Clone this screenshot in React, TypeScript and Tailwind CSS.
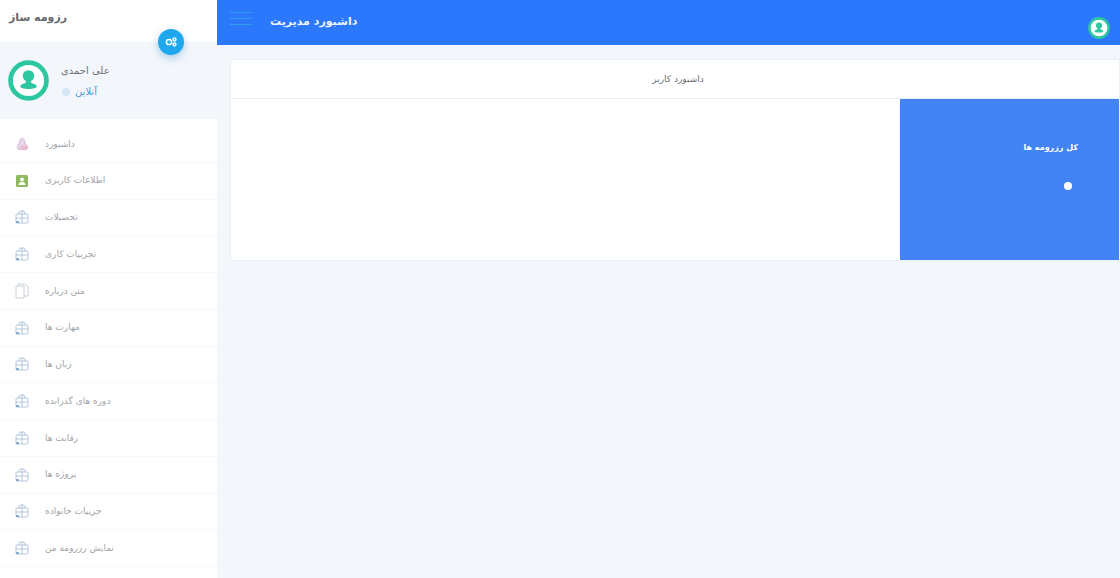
const font = { fontFamily: '"DejaVu Sans", "Noto Sans", sans-serif' };

function BoxIcon() {
  return (
    <svg width="14" height="14" viewBox="0 0 14 14" fill="none" stroke="#a9c0d8" strokeWidth="0.9">
      <path d="M4 4V2.5L5 1h4l1 1.5V4" />
      <rect x="1" y="4" width="12" height="9" rx="1" />
      <path d="M1 8h12M7 1v12" />
      <path d="M1 12h3" stroke="#5f8fc0" strokeWidth="1.4" />
    </svg>
  );
}
function DocIcon() {
  return (
    <svg width="14" height="16" viewBox="0 0 14 16" fill="none" stroke="#bcc6d0" strokeWidth="0.8">
      <path d="M1 3h8v12H1z" />
      <path d="M3 3V1h7l3 3v9H9" />
    </svg>
  );
}
function HomeIcon() {
  return (
    <svg width="13" height="13" viewBox="0 0 13 13">
      <path d="M6 1 8 2.5 9 6l3 4.5-1.5 2h-8L1 10.5 3.5 6 4 2.5z" fill="#ead9ec" stroke="#c9a6cf" strokeWidth="0.8" />
      <path d="M4.5 8.5h6.5v4H4.5z" fill="#e8bcc8" />
    </svg>
  );
}
function UserCardIcon() {
  return (
    <svg width="12" height="12" viewBox="0 0 12 12">
      <rect width="12" height="12" rx="1.5" fill="#8fba5f" />
      <circle cx="6" cy="4.4" r="2" fill="#fff" />
      <path d="M2.5 10c0-2 1.5-3 3.5-3s3.5 1 3.5 3z" fill="#fff" />
    </svg>
  );
}
function Avatar({ size }: { size: number }) {
  return (
    <svg width={size} height={size} viewBox="0 0 40 40">
      <circle cx="20" cy="20" r="17.5" fill="#fff" stroke="#2cc7a0" strokeWidth="4.6" />
      <circle cx="20" cy="15.5" r="5.6" fill="#2cc7a0" />
      <path d="M18 20h4l1 2.5c3 .8 5 1.8 5 3.3 0 1.4-3.5 2.4-8 2.4s-8-1-8-2.4c0-1.5 2-2.5 5-3.3z" fill="#2cc7a0" />
    </svg>
  );
}

const items: { label: string; icon: "home" | "card" | "box" | "doc" }[] = [
  { label: "داشبورد", icon: "home" },
  { label: "اطلاعات کاربری", icon: "card" },
  { label: "تحصیلات", icon: "box" },
  { label: "تجربیات کاری", icon: "box" },
  { label: "متن درباره", icon: "doc" },
  { label: "مهارت ها", icon: "box" },
  { label: "زبان ها", icon: "box" },
  { label: "دوره های گذرانده", icon: "box" },
  { label: "رقابت ها", icon: "box" },
  { label: "پروژه ها", icon: "box" },
  { label: "جزییات خانواده", icon: "box" },
  { label: "نمایش رزرومه من", icon: "box" },
];

function MenuIcon({ icon }: { icon: string }) {
  if (icon === "home") return <HomeIcon />;
  if (icon === "card") return <UserCardIcon />;
  if (icon === "doc") return <DocIcon />;
  return <BoxIcon />;
}

export default function App() {
  return (
    <div className="flex h-[578px] w-[1120px] overflow-hidden bg-[#f3f7fb]" style={font}>
      <aside className="relative flex w-[217px] shrink-0 flex-col bg-white">
        <div className="flex h-[42px] items-start pl-[9px] pt-[11px] text-[11px] font-bold leading-[14px] text-[#63686c]">
          <span dir="rtl">رزومه ساز</span>
        </div>
        <div className="absolute left-[158px] top-[29px] z-10 flex h-[26px] w-[26px] items-center justify-center rounded-full bg-[#1ea7ec] shadow-[0_3px_8px_rgba(30,120,200,0.35)]">
          <svg width="12" height="10" viewBox="0 0 12 10" fill="none" stroke="#fff" strokeWidth="1.5">
            <circle cx="4" cy="5" r="2.6" />
            <circle cx="9.5" cy="2.5" r="1.4" />
            <circle cx="9.5" cy="7.5" r="1.4" />
          </svg>
        </div>
        <div className="flex h-[77px] items-center gap-[12px] bg-[#f3f7fb] pl-[8px]">
          <Avatar size={41} />
          <div className="flex flex-col items-start gap-[9px] pt-[2px]">
            <span dir="rtl" className="text-[10px] leading-[12px] text-[#6d7277]">علی احمدی</span>
            <div className="flex items-center gap-[5px] pl-[1px]">
              <span className="h-[8px] w-[8px] rounded-full bg-[#d5e6f7]" />
              <span dir="rtl" className="text-[10px] leading-[12px] text-[#3f9ad8]">آنلاین</span>
            </div>
          </div>
        </div>
        <nav className="flex flex-col pt-[7px]">
          {items.map((it) => (
            <div key={it.label} className="flex h-[36.75px] items-center border-b border-[#f6f8fa]">
              <div className="flex w-[45px] justify-center pr-[1px]">
                <MenuIcon icon={it.icon} />
              </div>
              <span dir="rtl" className="pt-[1px] text-[9px] tracking-[0.4px] text-[#a0a4a9]">{it.label}</span>
            </div>
          ))}
        </nav>
      </aside>
      <main className="flex min-w-0 flex-1 flex-col">
        <header className="flex h-[45px] shrink-0 items-center bg-[#2b78fd] pl-[13px] pr-[10px]">
          <div className="mb-[8px] flex w-[22px] flex-col gap-[5px]">
            <span className="h-[1px] bg-[#2f9df0]" />
            <span className="h-[1px] bg-[#2f9df0]" />
            <span className="h-[1px] bg-[#2f9df0]" />
          </div>
          <span dir="rtl" className="mb-[1px] ml-[18px] text-[11px] font-bold text-[#eef4ff]">داشبورد مدیریت</span>
          <div className="ml-auto mt-[11px]">
            <Avatar size={22} />
          </div>
        </header>
        <section className="ml-[14px] mr-px mt-[15px] flex h-[200px] flex-col bg-white shadow-[0_0_2px_rgba(150,170,200,0.25)]">
          <div className="flex h-[39px] shrink-0 items-center justify-center border-b border-[#eaeef2] pl-[6px] pt-[2px] text-[9px] tracking-[0.2px] text-[#6c7074]">
            <span dir="rtl">داشبورد کاربر</span>
          </div>
          <div className="flex flex-1 justify-end">
            <div className="flex w-[219px] flex-col items-end bg-[#4384f5] pr-[41px] pt-[43px] text-white">
              <span dir="rtl" className="text-[8px] font-bold leading-[12px]">کل رزرومه ها</span>
              <span className="mr-[6px] mt-[28px] h-[8px] w-[8px] rounded-full bg-white" />
            </div>
          </div>
        </section>
      </main>
    </div>
  );
}
